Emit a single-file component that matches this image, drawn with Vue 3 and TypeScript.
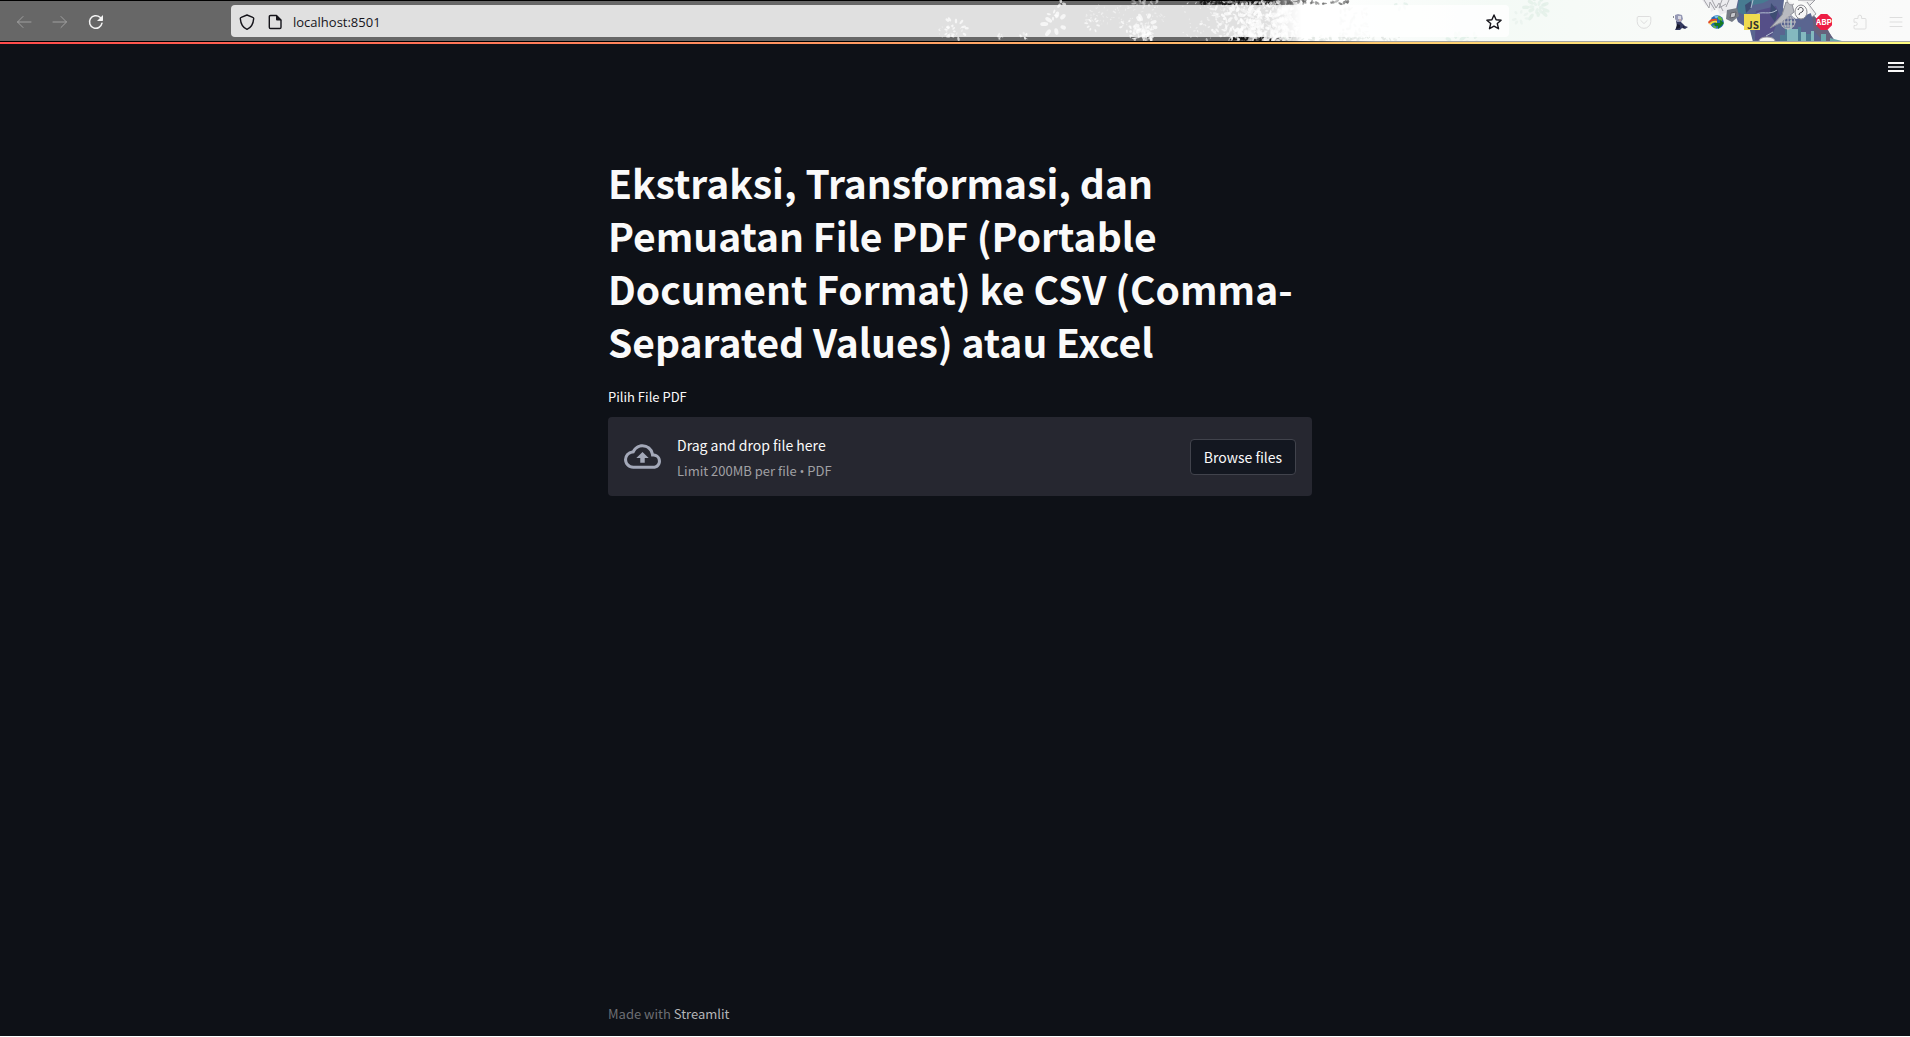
<script setup lang="ts">
import { ref } from 'vue'

interface Petal {
  x: number
  y: number
  rx: number
  ry: number
  a: number
  o: number
  c: string
}

const picker = ref<HTMLInputElement | null>(null)
const address = ref('localhost:8501')

function browse(): void {
  picker.value?.click()
}

// Small seeded generator so the theme artwork is the same on every load.
function seeded(seed: number): () => number {
  let s = seed
  return () => {
    s = (s * 16807) % 2147483647
    return s / 2147483647
  }
}

const rnd = seeded(4217)
const round = (n: number): number => Math.round(n * 10) / 10

function scatter(count: number, x0: number, x1: number, y0: number, y1: number, size: number, color: string, bias: number, opacity: number): Petal[] {
  return Array.from({ length: count }, () => ({
    x: round(x0 + (x1 - x0) * Math.pow(rnd(), bias)),
    y: round(y0 + (y1 - y0) * rnd()),
    rx: round(size * (0.5 + rnd())),
    ry: round(size * (0.3 + rnd() * 0.4)),
    a: Math.floor(rnd() * 180),
    o: round(opacity * (0.6 + rnd() * 0.4)),
    c: color,
  }))
}

function flower(cx: number, cy: number, radius: number, petals: number, size: number, color = '#fff'): Petal[] {
  return Array.from({ length: petals }, (_, i) => {
    const angle = (i * 360) / petals + rnd() * 30
    const r = radius * (0.65 + rnd() * 0.6)
    return {
      x: round(cx + r * Math.cos((angle * Math.PI) / 180)),
      y: round(cy + r * Math.sin((angle * Math.PI) / 180)),
      rx: round(size * (0.7 + rnd() * 0.4)),
      ry: round(size * 0.5),
      a: Math.floor(angle),
      o: 0.7,
      c: color,
    }
  })
}

const petals: Petal[] = [
  ...flower(956, 28, 10, 11, 2.4),
  ...flower(951, 31, 5, 8, 1.8),
  ...scatter(20, 938, 962, 24, 38, 1, '#fff', 1, 0.6),
  ...flower(1055, 24, 9, 7, 4),
  ...flower(1061, 3, 3, 3, 2.5),
  ...flower(1053, 15, 4, 4, 2),
  ...flower(1093, 24, 6, 8, 1.8),
  ...scatter(90, 1085, 1165, 5, 26, 1, '#fff', 1, 0.5),
  ...flower(1144, 25, 9, 9, 3.6),
  ...flower(1126, 26, 5, 5, 2),
  ...scatter(60, 1130, 1152, 26, 41, 2, '#fff', 1, 0.7),
  ...scatter(14, 1132, 1158, 0, 5, 2, '#ccc', 1, 0.7),
  ...scatter(6, 998, 1003, 32, 39, 1.6, '#fff', 1, 0.6),
  ...scatter(8, 1020, 1027, 33, 41, 2, '#fff', 1, 0.7),
  ...scatter(90, 1200, 1330, 0, 5, 2, '#151515', 1, 0.9),
  ...scatter(60, 1230, 1285, 37, 42, 2, '#151515', 1, 0.9),
  ...scatter(190, 1180, 1285, 1, 38, 1, '#fff', 0.6, 0.7),
  ...scatter(220, 1200, 1300, 1, 41, 2, '#fff', 0.6, 0.8),
  ...scatter(60, 1240, 1290, 1, 41, 4, '#fff', 0.8, 0.8),
  ...flower(1234, 14, 7, 7, 3.4),
  ...flower(1248, 28, 7, 8, 3.4),
]

const leaves: Petal[] = [
  ...scatter(34, 1284, 1350, 0, 4, 2, '#555', 1.2, 0.7),
  ...scatter(50, 1340, 1368, 8, 40, 2, '#d5d9d6', 1, 0.5),
  ...scatter(50, 1280, 1400, 36, 41, 2, '#e0e5e1', 1, 0.8),
  ...flower(1538, 7, 11, 11, 3.6, '#dfeee6'),
  ...flower(1538, 7, 5, 7, 3, '#e2efe8'),
  ...flower(1520, 18, 6, 7, 2.6, '#e8f1ed'),
  ...flower(1456, 42, 8, 9, 3.4, '#ddeee5'),
  ...flower(1473, 40, 6, 7, 2.6, '#e0eee7'),
  ...flower(1402, 2, 6, 7, 2.6, '#e0eee7'),
]
</script>

<template>
  <div class="window">
    <header class="toolbar">
      <svg class="art" viewBox="930 0 980 42" width="980" height="42" aria-hidden="true">
        <defs>
          <linearGradient id="paper" x1="0" x2="1" y1="0" y2="0">
            <stop offset="0" stop-color="#fff" stop-opacity="0" />
            <stop offset="0.05" stop-color="#fff" />
            <stop offset="0.35" stop-color="#f4faf6" />
            <stop offset="0.6" stop-color="#f8faf8" />
            <stop offset="1" stop-color="#fafafa" />
          </linearGradient>
        </defs>
        <ellipse v-for="(p, i) in petals" :key="'p' + i" :cx="p.x" :cy="p.y" :rx="p.rx" :ry="p.ry" :fill="p.c" :opacity="p.o" :transform="`rotate(${p.a} ${p.x} ${p.y})`" />
        <path fill="url(#paper)" d="M1270 0H1910V42H1270z" />
        <ellipse v-for="(p, i) in leaves" :key="'l' + i" :cx="p.x" :cy="p.y" :rx="p.rx" :ry="p.ry" :fill="p.c" :opacity="p.o" :transform="`rotate(${p.a} ${p.x} ${p.y})`" />
        <!-- theme character: hair, coat, headphones -->
        <path fill="#ececef" d="M1702 0l4 6 4-2 1 8 6-4 3 7 8-3 12 6V0z" />
        <path fill="none" stroke="#a2a2a8" d="M1704 0l5 8 1-6 5 8M1712 0l4 8 3-5 4 8M1722 0l-3 8 7-4M1729 0l-3 7" />
        <path fill="#5a6590" d="M1738 0h46l-1 8 4 4 9 7 15-6 14 14 8 11 3 4H1753l-3-12-12-8-3-8z" />
        <path fill="#477b91" d="M1739 0h30l-6 3-10 2-8 10-8-3z" />
        <path fill="#554f88" d="M1756 11l20-5 4 10-8 19-7 5h-10z" />
        <path fill="#3d4d72" d="M1745 5l6-4 1 6-6 6zM1771 3l7 8-3 11-5-7z" />
        <path fill="#777d87" d="M1727 10l10-2 2 8-7 6-6-3z" />
        <path fill="#c5c7cb" stroke="#5f6068" d="M1731 13l5-1-1 5-5 1z" />
        <path fill="#b8bac0" stroke="#8c8e97" d="M1786 2l-4 13-12 13 12-6 12-10-2-8z" />
        <path fill="#84b9bf" d="M1786 29h4v-9h2v9h6v12h-14zM1801 32h5v9h-5zM1811 31h3v10h-3z" />
        <path fill="#4c7c93" d="M1780 35h5v-9h2v15h-7zM1798 27h3v14h-3zM1806 34h5v7h-5z" />
        <path fill="#66627c" d="M1812 14l16 16 6 11h-11l-9-10z" />
        <path fill="#6ba9ae" d="M1821 34h5v7h-5zM1830 38l12 3h-12z" />
        <ellipse cx="1767" cy="41" rx="8" ry="4" fill="#f4f4f4" stroke="#a09da8" />
        <path fill="#efeff0" stroke="#9a9aa0" d="M1787 0c1 4 3 6 7 4M1798 0h17l-5 5M1807 2l9 12-4 3" />
        <ellipse cx="1801" cy="12" rx="6" ry="7" fill="#f6f6f6" stroke="#8b8b92" />
        <path fill="none" stroke="#45454d" d="M1798 10c1-4 6-3 5 1-1 2-4 1-4 4" />
        <path fill="none" stroke="#b4c0d2" d="M1755 15c7-5 14 1 22-5M1753 0l-2 8M1766 36l7-4" />
      </svg>

      <nav class="group">
        <button type="button" class="tool dim" aria-label="Back">
          <svg viewBox="0 0 16 16"><path d="M15 8H1.500M7 2.500L1.500 8 7 13.500" /></svg>
        </button>
        <button type="button" class="tool dim" aria-label="Forward">
          <svg viewBox="0 0 16 16"><path d="M1 8h13.500M9 2.500L14.500 8 9 13.500" /></svg>
        </button>
        <button type="button" class="tool bright" aria-label="Reload">
          <svg viewBox="0 0 16 16"><path stroke-width="1.500" d="M14 9.200A6.300 6.300 0 1 1 12 3.300L13.500 5" /><path fill="#f4f4f4" stroke="none" d="M15 1v5.300a.7.7 0 0 1-.7.700H9z" /></svg>
        </button>
      </nav>

      <div class="urlbar">
        <svg class="glyph" viewBox="0 0 16 16"><path stroke-width="1.400" d="M8 1l5.800 2.300c.6.200.9.700.9 1.300C14.300 9.500 12.200 13.600 8 15.300 3.800 13.600 1.700 9.500 1.300 4.600c0-.6.300-1.100.9-1.300z" /></svg>
        <svg class="glyph page" viewBox="0 0 16 16"><path stroke-width="1.400" d="M3.500 1.500h6L14 6v7.300a1.200 1.200 0 0 1-1.200 1.200H3.500a1.200 1.200 0 0 1-1.200-1.200V2.700a1.200 1.200 0 0 1 1.200-1.200z" /><path fill="#15141a" stroke="none" d="M9 1l5.500 5.500H10a1 1 0 0 1-1-1z" /></svg>
        <input v-model="address" class="address" type="text" aria-label="Address" />
        <button type="button" class="tool" aria-label="Bookmark this page">
          <svg viewBox="0 0 16 16"><path stroke="#15141a" stroke-width="1.400" d="M8 1l2.100 4.700 5 .5-3.800 3.400 1.200 5.100L8 12.100l-4.500 2.600 1.200-5.100L.9 6.200l5-.5z" /></svg>
        </button>
      </div>

      <nav class="group">
        <button type="button" class="tool faint" aria-label="Pocket">
          <svg viewBox="0 0 16 16"><path d="M2.500 2.500h11a1.300 1.300 0 0 1 1.300 1.300V7.500a6.800 6.800 0 0 1-13.600 0V3.800a1.300 1.300 0 0 1 1.300-1.300zM4.800 6.500L8 9.600l3.200-3.100" /></svg>
        </button>
        <button type="button" class="tool" aria-label="Character extension">
          <svg viewBox="0 0 16 16">
            <g stroke="none">
              <path fill="#353a60" d="M4 7l4 0 3 3 2 2 3 1-3 2-3-1-2 2H3l2-4z" />
              <path fill="#9699b5" d="M3 1l3-1 4 1 1 4-2 3-4 0-2-3z" />
              <path fill="#d8d9e4" d="M6 2l3 0 0 3-3 0z" />
              <path fill="#17182d" d="M5 10l3 1 0 3-4 1zM1 3l1-1v2zM11 12l2 1-2 1z" />
              <path fill="#c4a9a9" d="M7 5h2v2H7z" />
            </g>
          </svg>
        </button>
        <button type="button" class="tool" aria-label="Download manager">
          <svg viewBox="0 0 16 16">
            <g stroke="none">
              <circle cx="9" cy="8" r="6.800" fill="#2467b5" />
              <path fill="#7cc4e8" d="M6 2.500l3-1 2 1-3 2z" />
              <path fill="#65b83d" d="M10 2l3 1 2 3-2 1-3-2zM4 11l3 1 2 2-3 0z" />
              <path fill="#e34b25" d="M0 8c2-3 5-4 9-3v2C5 6 3 7 1 10z" />
              <path fill="#f7da35" d="M1 10c2-3 5-4 8-3v2C6 8 4 9 3 11z" />
              <path fill="#147b20" d="M6 9h6V6l4 3-6 6v-3H7z" />
            </g>
          </svg>
        </button>
        <button type="button" class="tool js" aria-label="JavaScript toggle">JS</button>
        <button type="button" class="tool globe" aria-label="Web">
          <svg viewBox="0 0 16 16"><circle cx="8" cy="8" r="7" /><ellipse cx="8" cy="8" rx="3.500" ry="7" /><path d="M8 1v14M1 8h14M2.200 4h11.600M2.200 12h11.600" /></svg>
        </button>
        <button type="button" class="tool abp" aria-label="Adblock Plus">ABP</button>
        <button type="button" class="tool faint" aria-label="Extensions">
          <svg viewBox="0 0 16 16"><path d="M2 8V5.500A1 1 0 0 1 3 4.500h3V3a1.800 1.800 0 0 1 3.600 0v1.500H13a1 1 0 0 1 1 1V14a1 1 0 0 1-1 1H3a1 1 0 0 1-1-1v-2.500h1.500a1.700 1.700 0 0 0 0-3.500z" /></svg>
        </button>
        <button type="button" class="tool faint" aria-label="Application menu">
          <svg viewBox="0 0 16 16"><path d="M2 3.500h12M2 8h12M2 12.500h12" /></svg>
        </button>
      </nav>
    </header>

    <div class="app">
      <div class="decoration"></div>
      <div class="appbar">
        <button type="button" class="menu" aria-label="Main menu">
          <svg width="16" height="10" viewBox="0 0 16 10"><path fill="#fafafa" d="M0 0h16v2H0zM0 8h16v2H0z" /><path fill="#c4c5c8" d="M0 4h16v2H0z" /></svg>
        </button>
      </div>

      <div class="content">
        <main class="block">
          <h1>Ekstraksi, Transformasi, dan Pemuatan File PDF (Portable Document Format) ke CSV (Comma-Separated Values) atau Excel</h1>
          <label class="caption" for="pdf">Pilih File PDF</label>
          <section class="drop">
            <svg class="cloud" viewBox="0 0 24 24"><path fill="#a3a8b8" d="M19.350 10.040A7.490 7.490 0 0 0 12 4C9.110 4 6.600 5.640 5.350 8.040A5.994 5.994 0 0 0 0 14c0 3.310 2.690 6 6 6h13c2.760 0 5-2.240 5-5 0-2.640-2.050-4.780-4.650-4.960zM19 18H6c-2.210 0-4-1.790-4-4 0-2.050 1.530-3.760 3.560-3.970l1.070-.11.500-.95A5.469 5.469 0 0 1 12 6c2.620 0 4.880 1.860 5.390 4.430l.3 1.500 1.530.110A2.980 2.980 0 0 1 22 15c0 1.650-1.350 3-3 3zM8 13h2.550v3h2.900v-3H16l-4-4z" /></svg>
            <div class="hint">
              <span class="lead">Drag and drop file here</span>
              <small>Limit 200MB per file <span class="dot">•</span> PDF</small>
            </div>
            <input id="pdf" ref="picker" type="file" accept=".pdf" hidden />
            <button type="button" class="browse" @click="browse">Browse files</button>
          </section>
        </main>

        <footer>Made with <a href="https://streamlit.io">Streamlit</a></footer>
      </div>
    </div>
  </div>
</template>

<style>
body {
  margin: 0;
  background: #0e1117;
}
</style>

<style scoped>
.window {
  display: flex;
  flex-direction: column;
  min-height: 100vh;
  box-sizing: border-box;
  border-bottom: 1px solid #fff;
  background: #0e1117;
  color: #fafafa;
  font-family: "Noto Sans CJK SC", "Open Sans", sans-serif;
}

button {
  font-family: inherit;
  cursor: pointer;
}

.toolbar {
  position: relative;
  display: flex;
  align-items: center;
  height: 42px;
  padding: 2px 6px 0 16px;
  box-sizing: border-box;
  overflow: hidden;
  background: #676767;
}

.toolbar::before,
.toolbar::after {
  content: "";
  position: absolute;
  left: 0;
  right: 0;
  height: 1px;
  background: linear-gradient(90deg, #000 66%, #a4a4a4 72%);
}

.toolbar::before {
  top: 0;
}

.toolbar::after {
  bottom: 0;
}

.art {
  position: absolute;
  top: 0;
  right: 0;
}

.group {
  position: relative;
  display: flex;
  gap: 20px;
}

.tool {
  display: flex;
  align-items: center;
  justify-content: center;
  width: 16px;
  height: 16px;
  padding: 0;
  border: 0;
  background: none;
}

.tool svg,
.glyph {
  flex: none;
  width: 16px;
  height: 16px;
  fill: none;
  stroke: currentColor;
  stroke-linecap: round;
  stroke-linejoin: round;
}

.dim {
  color: #a0a0a0;
}

.bright {
  color: #f4f4f4;
}

.faint {
  color: #dedede;
}

.globe {
  color: #bcbcc0;
}

.js {
  align-items: flex-end;
  justify-content: flex-end;
  padding-right: 1px;
  background: #f0db4f;
  color: #323330;
  font: bold 10px/11px "Noto Sans CJK SC", sans-serif;
}

.abp {
  background: #ed1e45;
  clip-path: polygon(30% 0, 70% 0, 100% 30%, 100% 70%, 70% 100%, 30% 100%, 0 70%, 0 30%);
  color: #fff;
  font: bold 8px/16px "Noto Sans CJK SC", sans-serif;
}

.urlbar {
  position: relative;
  display: flex;
  flex: 1;
  align-items: center;
  height: 32px;
  margin: 0 127px 2px;
  padding: 2px 7px 0 8px;
  box-sizing: border-box;
  border-radius: 4px;
  background: rgba(255, 255, 255, 0.8);
  color: #15141a;
}

.page {
  margin-left: 12px;
}

.address {
  flex: 1;
  min-width: 0;
  margin-left: 10px;
  padding: 0;
  border: 0;
  outline: 0;
  background: none;
  color: #15141a;
  font: 13px/20px "Open Sans", sans-serif;
}

.app {
  display: flex;
  flex: 1;
  flex-direction: column;
}

.decoration {
  height: 2px;
  background: linear-gradient(90deg, #ff4b4b, #fffd80);
}

.appbar {
  display: flex;
  justify-content: flex-end;
  padding: 18px 6px 0;
}

.menu {
  display: flex;
  padding: 0;
  border: 0;
  background: none;
}

.content {
  display: flex;
  flex: 1;
  flex-direction: column;
  align-items: center;
  padding: 84px 0 12px 10px;
}

.block,
footer {
  width: 100%;
  max-width: 704px;
}

h1 {
  margin: 0;
  font-size: 39px;
  font-weight: 700;
  line-height: 53px;
}

.caption {
  display: block;
  margin-top: 19px;
  font-size: 13px;
  line-height: 20px;
}

.drop {
  display: flex;
  align-items: center;
  margin-top: 10px;
  padding: 14px 16px;
  border-radius: 4px;
  background: #262730;
}

.cloud {
  flex: none;
  width: 37px;
  height: 37px;
}

.hint {
  display: flex;
  flex: 1;
  flex-direction: column;
  margin-left: 16px;
}

.lead {
  font-size: 14px;
  line-height: 28px;
}

small {
  color: #a0a0a4;
  font-size: 13px;
  line-height: 23px;
}

.dot {
  font-family: "Open Sans", sans-serif;
  line-height: 1;
}

.browse {
  width: 106px;
  height: 36px;
  padding: 0;
  border: 1px solid #41434c;
  border-radius: 4px;
  background: #131720;
  color: #fafafa;
  font-size: 14px;
  line-height: 26px;
}

footer {
  margin-top: auto;
  color: #6c6e73;
  font-size: 13px;
  line-height: 20px;
}

footer a {
  color: #b4b5b8;
  text-decoration: none;
}
</style>
